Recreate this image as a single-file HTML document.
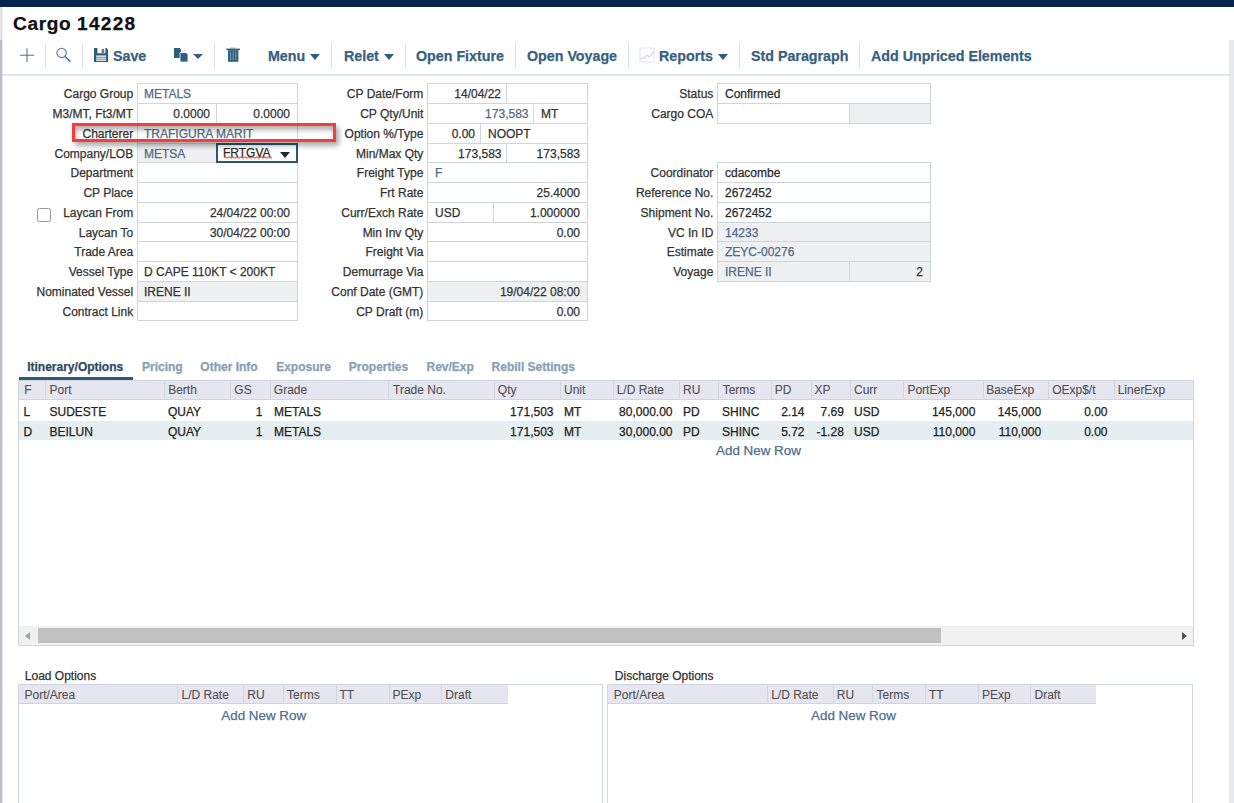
<!DOCTYPE html><html><head><meta charset="utf-8"><style>
*{box-sizing:border-box;margin:0;padding:0}
html,body{width:1234px;height:803px;overflow:hidden;background:#fff}
body{position:relative;font-family:"Liberation Sans",sans-serif;font-size:12px;color:#333;-webkit-text-stroke:0.25px currentColor}
.a{position:absolute;white-space:nowrap}
.lbl{position:absolute;text-align:right;white-space:nowrap;color:#333;line-height:19px}
.c{position:absolute;border:1px solid #d0d5dd;line-height:18px;padding-top:1px;white-space:nowrap;overflow:hidden;padding-left:6px;padding-right:6px}
.r{text-align:right}
.bl{color:#4f6a86}
.g{background:#eff0f2}
.tb{position:absolute;top:43.5px;font-size:15px;transform:scaleX(.95);transform-origin:0 0;font-weight:bold;color:#36607f;line-height:24px;white-space:nowrap}
.sep{position:absolute;top:43px;width:1px;height:25px;background:#dde2e8}
.caret{position:absolute;width:0;height:0;border-left:5px solid transparent;border-right:5px solid transparent;border-top:6px solid #2f5f7d}
.gh{position:absolute;background:#e6e6f0;border-bottom:1px solid #cfd5df;border-top:1px solid #d5dae3}
.gs{position:absolute;width:1px;background:#d0d5de}
.ht{position:absolute;color:#505050;-webkit-text-stroke:0.1px currentColor;line-height:18px;white-space:nowrap}
.rt{position:absolute;color:#222;line-height:19px;white-space:nowrap}
.tab{position:absolute;top:357.8px;font-weight:bold;color:#86a0b5;line-height:18px;white-space:nowrap}
.anr{position:absolute;font-size:13.4px;color:#4e6e8d;line-height:16px;white-space:nowrap}
</style></head><body>
<div class="a" style="left:0;top:0;width:1234px;height:7px;background:#03234a"></div>
<div class="a" style="left:0;top:7px;width:1px;height:33px;background:#e6e6f0"></div>
<div class="a" style="left:1px;top:7px;width:1px;height:33px;background:#d6dbe4"></div>
<div class="a" style="left:2px;top:7px;width:1px;height:33px;background:#eef0f4"></div>
<div class="a" style="left:0;top:40px;width:2px;height:763px;background:#b9bfc9"></div>
<div class="a" style="left:2px;top:40px;width:1px;height:763px;background:#e2e5ea"></div>
<div class="a" style="left:1229px;top:40px;width:5px;height:763px;background:#e6e7ef"></div>
<div class="a" style="left:13.2px;top:12.8px;font-size:18px;font-weight:bold;letter-spacing:0.6px;color:#111;line-height:22px;transform:scaleX(1.06);transform-origin:0 0">Cargo</div>
<div class="a" style="left:77px;top:12.8px;font-size:18px;font-weight:bold;letter-spacing:1.2px;color:#111;line-height:22px;transform:scaleX(1.06);transform-origin:0 0">14228</div>
<div class="a" style="left:3px;top:74px;width:1226px;height:2px;background:#dfe3ea"></div>
<svg class="a" style="left:19px;top:47px" width="16" height="16"><path d="M8 1.2V15M1 8.2H15.2" stroke="#56728c" stroke-width="1.1" fill="none"/></svg>
<div class="sep" style="left:45px"></div>
<svg class="a" style="left:55px;top:47px" width="17" height="17"><circle cx="6.6" cy="5.9" r="4.7" stroke="#5b7690" stroke-width="1.1" fill="none"/><path d="M10 9.5L15.4 14.6" stroke="#4e6a84" stroke-width="1.5"/></svg>
<div class="sep" style="left:82px"></div>
<svg class="a" style="left:94px;top:48px" width="14" height="14"><path d="M0 0H12.5L14 1.5V14H0Z" fill="#2f5a78"/><rect x="3.4" y="0" width="8" height="5.2" fill="#fff"/><rect x="7.6" y="0.9" width="2.6" height="4" fill="#5d7f98"/><rect x="2.2" y="7.4" width="9.9" height="5.6" fill="#dfe5ec"/><path d="M2.2 9.4H12.1M2.2 11.3H12.1" stroke="#7b8fa3" stroke-width="0.9"/></svg>
<div class="tb" style="left:112.5px">Save</div>
<svg class="a" style="left:173px;top:47px" width="17" height="16"><path d="M1 1H6.5L8 2.5V11H1Z" fill="#2f5f7d"/><path d="M7 5.5H13L15 7.5V15H7Z" fill="#2f5f7d" stroke="#fff" stroke-width="0.8"/></svg>
<div class="caret" style="left:193px;top:53.5px;border-left-width:5.3px;border-right-width:5.3px;border-top-width:5.5px"></div>
<div class="sep" style="left:214px"></div>
<svg class="a" style="left:226px;top:47px" width="15" height="16"><rect x="0.3" y="1.6" width="13.6" height="1.6" fill="#2f5f7d"/><rect x="4.5" y="0.6" width="5" height="1.2" fill="#7f9db3"/><rect x="2" y="3.2" width="10.4" height="11.6" fill="#2f5f7d"/><path d="M4.6 4.8V13.4M7.2 4.8V13.4M9.8 4.8V13.4" stroke="#8aa3b5" stroke-width="0.9"/></svg>
<div class="tb" style="left:268px">Menu</div>
<div class="caret" style="left:310px;top:53.5px"></div>
<div class="sep" style="left:331px"></div>
<div class="tb" style="left:343.5px">Relet</div>
<div class="caret" style="left:384px;top:53.5px"></div>
<div class="sep" style="left:405px"></div>
<div class="tb" style="left:416.3px">Open Fixture</div>
<div class="sep" style="left:515px"></div>
<div class="tb" style="left:526.8px">Open Voyage</div>
<div class="sep" style="left:628px"></div>
<svg class="a" style="left:639px;top:47px" width="16" height="16"><rect x="1" y="1" width="14" height="14" stroke="#e6e4ec" stroke-width="1" fill="none"/><path d="M1.3 12.3C2.5 10.8 3.5 11 4.8 11.2C6.5 11.3 7 8.2 8.3 8.3C9.3 8.4 9.5 9.8 10.5 9.7C12.2 9.5 13.5 5.5 15 3.8" stroke="#cdd3e3" stroke-width="1.1" fill="none"/></svg>
<div class="tb" style="left:658.8px">Reports</div>
<div class="caret" style="left:717.5px;top:53.5px"></div>
<div class="sep" style="left:739px"></div>
<div class="tb" style="left:751px">Std Paragraph</div>
<div class="sep" style="left:859px"></div>
<div class="tb" style="left:871px">Add Unpriced Elements</div>
<div class="lbl" style="right:1100.8px;top:85px">Cargo Group</div>
<div class="lbl" style="right:1100.8px;top:105px">M3/MT, Ft3/MT</div>
<div class="lbl" style="right:1100.8px;top:125px">Charterer</div>
<div class="lbl" style="right:1100.8px;top:145px">Company/LOB</div>
<div class="lbl" style="right:1100.8px;top:164px">Department</div>
<div class="lbl" style="right:1100.8px;top:184px">CP Place</div>
<div class="lbl" style="right:1100.8px;top:204px">Laycan From</div>
<div class="lbl" style="right:1100.8px;top:224px">Laycan To</div>
<div class="lbl" style="right:1100.8px;top:243px">Trade Area</div>
<div class="lbl" style="right:1100.8px;top:263px">Vessel Type</div>
<div class="lbl" style="right:1100.8px;top:283px">Nominated Vessel</div>
<div class="lbl" style="right:1100.8px;top:303px">Contract Link</div>
<div class="c bl" style="left:137px;top:83px;width:161px;height:21px;">METALS</div>
<div class="c r" style="left:137px;top:103px;width:80px;height:21px;">0.0000</div>
<div class="c r" style="left:216px;top:103px;width:82px;height:21px;padding-right:7px">0.0000</div>
<div class="c bl" style="left:137px;top:123px;width:161px;height:21px;">TRAFIGURA MARIT</div>
<div class="c bl g" style="left:137px;top:143px;width:161px;height:20px;">METSA</div>
<div class="c " style="left:137px;top:162px;width:161px;height:21px;"></div>
<div class="c " style="left:137px;top:182px;width:161px;height:21px;"></div>
<div class="c r" style="left:137px;top:202px;width:161px;height:21px;padding-right:7px">24/04/22 00:00</div>
<div class="c r" style="left:137px;top:222px;width:161px;height:20px;padding-right:7px">30/04/22 00:00</div>
<div class="c " style="left:137px;top:241px;width:161px;height:21px;"></div>
<div class="c " style="left:137px;top:261px;width:161px;height:21px;">D CAPE 110KT &lt; 200KT</div>
<div class="c g" style="left:137px;top:281px;width:161px;height:21px;">IRENE II</div>
<div class="c " style="left:137px;top:301px;width:161px;height:20px;"></div>
<div class="a" style="left:216px;top:143px;width:82px;height:20px;border:2px solid #28576f;background:#fff"></div>
<div class="a" style="left:223px;top:144px;line-height:18px;color:#2b2b2b">FRTGVA</div>
<svg class="a" style="left:223.5px;top:156.2px" width="49" height="4"><path d="M0 1.5 Q1 0 2 1.5 Q3 3 4 1.5 Q5 0 6 1.5 Q7 3 8 1.5 Q9 0 10 1.5 Q11 3 12 1.5 Q13 0 14 1.5 Q15 3 16 1.5 Q17 0 18 1.5 Q19 3 20 1.5 Q21 0 22 1.5 Q23 3 24 1.5 Q25 0 26 1.5 Q27 3 28 1.5 Q29 0 30 1.5 Q31 3 32 1.5 Q33 0 34 1.5 Q35 3 36 1.5 Q37 0 38 1.5 Q39 3 40 1.5 Q41 0 42 1.5 Q43 3 44 1.5 Q45 0 46 1.5 Q47 3 48 1.5" stroke="#ff1a1a" stroke-width="1" fill="none"/></svg>
<div class="caret" style="left:280px;top:151.5px;border-left-width:5.8px;border-right-width:5.8px;border-top-width:6px;border-top-color:#1b2a33"></div>
<div class="a" style="left:36.5px;top:207.5px;width:14px;height:14px;border:1.5px solid #9a9a9a;border-radius:2.5px;background:#fff"></div>
<div class="lbl" style="right:810.7px;top:85px">CP Date/Form</div>
<div class="lbl" style="right:810.7px;top:105px">CP Qty/Unit</div>
<div class="lbl" style="right:810.7px;top:125px">Option %/Type</div>
<div class="lbl" style="right:810.7px;top:145px">Min/Max Qty</div>
<div class="lbl" style="right:810.7px;top:164px">Freight Type</div>
<div class="lbl" style="right:810.7px;top:184px">Frt Rate</div>
<div class="lbl" style="right:810.7px;top:204px">Curr/Exch Rate</div>
<div class="lbl" style="right:810.7px;top:224px">Min Inv Qty</div>
<div class="lbl" style="right:810.7px;top:243px">Freight Via</div>
<div class="lbl" style="right:810.7px;top:263px">Demurrage Via</div>
<div class="lbl" style="right:810.7px;top:283px">Conf Date (GMT)</div>
<div class="lbl" style="right:810.7px;top:303px">CP Draft (m)</div>
<div class="c r" style="left:427px;top:83px;width:80px;height:21px;padding-right:5px">14/04/22</div>
<div class="c " style="left:506px;top:83px;width:82px;height:21px;"></div>
<div class="c r bl" style="left:427px;top:103px;width:107px;height:21px;padding-right:4.5px">173,583</div>
<div class="c " style="left:533px;top:103px;width:55px;height:21px;padding-left:7px">MT</div>
<div class="c r" style="left:427px;top:123px;width:54px;height:21px;padding-right:5px">0.00</div>
<div class="c " style="left:480px;top:123px;width:108px;height:21px;padding-left:7px">NOOPT</div>
<div class="c r" style="left:427px;top:143px;width:80px;height:20px;padding-right:4.5px">173,583</div>
<div class="c r" style="left:506px;top:143px;width:82px;height:20px;padding-right:7px">173,583</div>
<div class="c bl" style="left:427px;top:162px;width:161px;height:21px;padding-left:7px">F</div>
<div class="c r" style="left:427px;top:182px;width:161px;height:21px;padding-right:7px">25.4000</div>
<div class="c " style="left:427px;top:202px;width:67px;height:21px;padding-left:7px">USD</div>
<div class="c r" style="left:493px;top:202px;width:95px;height:21px;padding-right:7px">1.000000</div>
<div class="c r" style="left:427px;top:222px;width:161px;height:20px;padding-right:7px">0.00</div>
<div class="c " style="left:427px;top:241px;width:161px;height:21px;"></div>
<div class="c " style="left:427px;top:261px;width:161px;height:21px;"></div>
<div class="c r g" style="left:427px;top:281px;width:161px;height:21px;padding-right:7px">19/04/22 08:00</div>
<div class="c r" style="left:427px;top:301px;width:161px;height:20px;padding-right:7px">0.00</div>
<div class="lbl" style="right:520.7px;top:85px">Status</div>
<div class="lbl" style="right:520.7px;top:105px">Cargo COA</div>
<div class="c " style="left:717px;top:83px;width:214px;height:21px;color:#2b2b2b;padding-left:7px">Confirmed</div>
<div class="c " style="left:717px;top:103px;width:133px;height:21px;"></div>
<div class="c g" style="left:849px;top:103px;width:82px;height:21px;"></div>
<div class="lbl" style="right:520.7px;top:164px">Coordinator</div>
<div class="lbl" style="right:520.7px;top:184px">Reference No.</div>
<div class="lbl" style="right:520.7px;top:204px">Shipment No.</div>
<div class="lbl" style="right:520.7px;top:224px">VC In ID</div>
<div class="lbl" style="right:520.7px;top:243px">Estimate</div>
<div class="lbl" style="right:520.7px;top:263px">Voyage</div>
<div class="c " style="left:717px;top:162px;width:214px;height:21px;color:#2b2b2b;padding-left:7px">cdacombe</div>
<div class="c " style="left:717px;top:182px;width:214px;height:21px;color:#2b2b2b;padding-left:7px">2672452</div>
<div class="c " style="left:717px;top:202px;width:214px;height:21px;color:#2b2b2b;padding-left:7px">2672452</div>
<div class="c bl g" style="left:717px;top:222px;width:214px;height:20px;padding-left:7px">14233</div>
<div class="c bl g" style="left:717px;top:241px;width:214px;height:21px;padding-left:7px">ZEYC-00276</div>
<div class="c bl g" style="left:717px;top:261px;width:133px;height:21px;padding-left:7px">IRENE II</div>
<div class="c r g" style="left:849px;top:261px;width:82px;height:21px;padding-right:7px">2</div>
<div class="a" style="left:72px;top:123px;width:263.5px;height:19px;border:3px solid #f83b3b;box-shadow:3px 4px 5px rgba(0,0,0,0.32), inset 1px 4px 5px rgba(0,0,0,0.3)"></div>
<div class="tab" style="left:27.2px;color:#2c4a5f">Itinerary/Options</div>
<div class="tab" style="left:142px;">Pricing</div>
<div class="tab" style="left:200.3px;">Other Info</div>
<div class="tab" style="left:276.2px;">Exposure</div>
<div class="tab" style="left:348.8px;">Properties</div>
<div class="tab" style="left:426.5px;">Rev/Exp</div>
<div class="tab" style="left:491.6px;">Rebill Settings</div>
<div class="a" style="left:19px;top:377px;width:114px;height:3px;background:#2f5a74"></div>
<div class="a" style="left:18px;top:380px;width:1176px;height:266px;border:1px solid #cfd6e0"></div>
<div class="gh" style="left:19px;top:381px;width:1174px;height:19px;border-top:none"></div>
<div class="gs" style="left:45px;top:381px;height:18px"></div>
<div class="gs" style="left:164px;top:381px;height:18px"></div>
<div class="gs" style="left:230px;top:381px;height:18px"></div>
<div class="gs" style="left:270px;top:381px;height:18px"></div>
<div class="gs" style="left:388px;top:381px;height:18px"></div>
<div class="gs" style="left:494px;top:381px;height:18px"></div>
<div class="gs" style="left:560px;top:381px;height:18px"></div>
<div class="gs" style="left:613px;top:381px;height:18px"></div>
<div class="gs" style="left:679px;top:381px;height:18px"></div>
<div class="gs" style="left:718px;top:381px;height:18px"></div>
<div class="gs" style="left:771px;top:381px;height:18px"></div>
<div class="gs" style="left:811px;top:381px;height:18px"></div>
<div class="gs" style="left:850px;top:381px;height:18px"></div>
<div class="gs" style="left:903px;top:381px;height:18px"></div>
<div class="gs" style="left:983px;top:381px;height:18px"></div>
<div class="gs" style="left:1048px;top:381px;height:18px"></div>
<div class="gs" style="left:1114px;top:381px;height:18px"></div>
<div class="ht" style="left:24.2px;top:381px">F</div>
<div class="ht" style="left:49.5px;top:381px">Port</div>
<div class="ht" style="left:168.2px;top:381px">Berth</div>
<div class="ht" style="left:234.3px;top:381px">GS</div>
<div class="ht" style="left:273.8px;top:381px">Grade</div>
<div class="ht" style="left:393px;top:381px">Trade No.</div>
<div class="ht" style="left:497.8px;top:381px">Qty</div>
<div class="ht" style="left:564px;top:381px">Unit</div>
<div class="ht" style="left:616.7px;top:381px">L/D Rate</div>
<div class="ht" style="left:683px;top:381px">RU</div>
<div class="ht" style="left:722.7px;top:381px">Terms</div>
<div class="ht" style="left:774.7px;top:381px">PD</div>
<div class="ht" style="left:814.6px;top:381px">XP</div>
<div class="ht" style="left:854px;top:381px">Curr</div>
<div class="ht" style="left:907.4px;top:381px">PortExp</div>
<div class="ht" style="left:986.2px;top:381px">BaseExp</div>
<div class="ht" style="left:1052.2px;top:381px">OExp$/t</div>
<div class="ht" style="left:1117.7px;top:381px">LinerExp</div>
<div class="a" style="left:19px;top:421px;width:1174px;height:19px;background:#e5eef1"></div>
<div class="rt" style="left:23.5px;top:403.0px">L</div>
<div class="rt" style="left:49.5px;top:403.0px">SUDESTE</div>
<div class="rt" style="left:168px;top:403.0px">QUAY</div>
<div class="rt" style="right:971.5px;top:403.0px">1</div>
<div class="rt" style="left:274px;top:403.0px">METALS</div>
<div class="rt" style="right:680.5px;top:403.0px">171,503</div>
<div class="rt" style="left:564px;top:403.0px">MT</div>
<div class="rt" style="right:561.5px;top:403.0px">80,000.00</div>
<div class="rt" style="left:683px;top:403.0px">PD</div>
<div class="rt" style="left:722px;top:403.0px">SHINC</div>
<div class="rt" style="right:429.5px;top:403.0px">2.14</div>
<div class="rt" style="right:390.20000000000005px;top:403.0px">7.69</div>
<div class="rt" style="left:854px;top:403.0px">USD</div>
<div class="rt" style="right:258.70000000000005px;top:403.0px">145,000</div>
<div class="rt" style="right:192.79999999999995px;top:403.0px">145,000</div>
<div class="rt" style="right:126.5px;top:403.0px">0.00</div>
<div class="rt" style="left:23.5px;top:422.6px">D</div>
<div class="rt" style="left:49.5px;top:422.6px">BEILUN</div>
<div class="rt" style="left:168px;top:422.6px">QUAY</div>
<div class="rt" style="right:971.5px;top:422.6px">1</div>
<div class="rt" style="left:274px;top:422.6px">METALS</div>
<div class="rt" style="right:680.5px;top:422.6px">171,503</div>
<div class="rt" style="left:564px;top:422.6px">MT</div>
<div class="rt" style="right:561.5px;top:422.6px">30,000.00</div>
<div class="rt" style="left:683px;top:422.6px">PD</div>
<div class="rt" style="left:722px;top:422.6px">SHINC</div>
<div class="rt" style="right:429.5px;top:422.6px">5.72</div>
<div class="rt" style="right:390.20000000000005px;top:422.6px">-1.28</div>
<div class="rt" style="left:854px;top:422.6px">USD</div>
<div class="rt" style="right:258.70000000000005px;top:422.6px">110,000</div>
<div class="rt" style="right:192.79999999999995px;top:422.6px">110,000</div>
<div class="rt" style="right:126.5px;top:422.6px">0.00</div>
<div class="anr" style="left:716px;top:442.5px">Add New Row</div>
<div class="a" style="left:19px;top:626px;width:1174px;height:19px;background:#f1f1f1"></div>
<div class="a" style="left:38px;top:628px;width:903px;height:14.5px;background:#c1c1c1"></div>
<div class="a" style="left:25px;top:631.5px;width:0;height:0;border-top:4px solid transparent;border-bottom:4px solid transparent;border-right:5px solid #a3a3a3"></div>
<div class="a" style="left:1182px;top:631.5px;width:0;height:0;border-top:4px solid transparent;border-bottom:4px solid transparent;border-left:5px solid #505050"></div>
<div class="a" style="left:24.8px;top:668px;line-height:16px;color:#333">Load Options</div>
<div class="a" style="left:18px;top:684px;width:585px;height:130px;border:1px solid #cfd6e0"></div>
<div class="gh" style="left:19px;top:685px;width:489px;height:19px;border-top:none"></div>
<div class="gs" style="left:177px;top:685px;height:18px"></div>
<div class="gs" style="left:243px;top:685px;height:18px"></div>
<div class="gs" style="left:283px;top:685px;height:18px"></div>
<div class="gs" style="left:336px;top:685px;height:18px"></div>
<div class="gs" style="left:389px;top:685px;height:18px"></div>
<div class="gs" style="left:441px;top:685px;height:18px"></div>
<div class="ht" style="left:24.5px;top:685.8px">Port/Area</div>
<div class="ht" style="left:181.5px;top:685.8px">L/D Rate</div>
<div class="ht" style="left:247.3px;top:685.8px">RU</div>
<div class="ht" style="left:287px;top:685.8px">Terms</div>
<div class="ht" style="left:339.5px;top:685.8px">TT</div>
<div class="ht" style="left:392.5px;top:685.8px">PExp</div>
<div class="ht" style="left:445.3px;top:685.8px">Draft</div>
<div class="anr" style="left:221.3px;top:708px">Add New Row</div>
<div class="a" style="left:614.8px;top:668px;line-height:16px;color:#333">Discharge Options</div>
<div class="a" style="left:607px;top:684px;width:586px;height:130px;border:1px solid #cfd6e0"></div>
<div class="gh" style="left:608px;top:685px;width:488px;height:19px;border-top:none"></div>
<div class="gs" style="left:767px;top:685px;height:18px"></div>
<div class="gs" style="left:833px;top:685px;height:18px"></div>
<div class="gs" style="left:872px;top:685px;height:18px"></div>
<div class="gs" style="left:925px;top:685px;height:18px"></div>
<div class="gs" style="left:978px;top:685px;height:18px"></div>
<div class="gs" style="left:1030px;top:685px;height:18px"></div>
<div class="ht" style="left:613.8px;top:685.8px">Port/Area</div>
<div class="ht" style="left:771.2px;top:685.8px">L/D Rate</div>
<div class="ht" style="left:836.8px;top:685.8px">RU</div>
<div class="ht" style="left:876.6px;top:685.8px">Terms</div>
<div class="ht" style="left:929px;top:685.8px">TT</div>
<div class="ht" style="left:982px;top:685.8px">PExp</div>
<div class="ht" style="left:1034.5px;top:685.8px">Draft</div>
<div class="anr" style="left:811px;top:708px">Add New Row</div>
</body></html>
